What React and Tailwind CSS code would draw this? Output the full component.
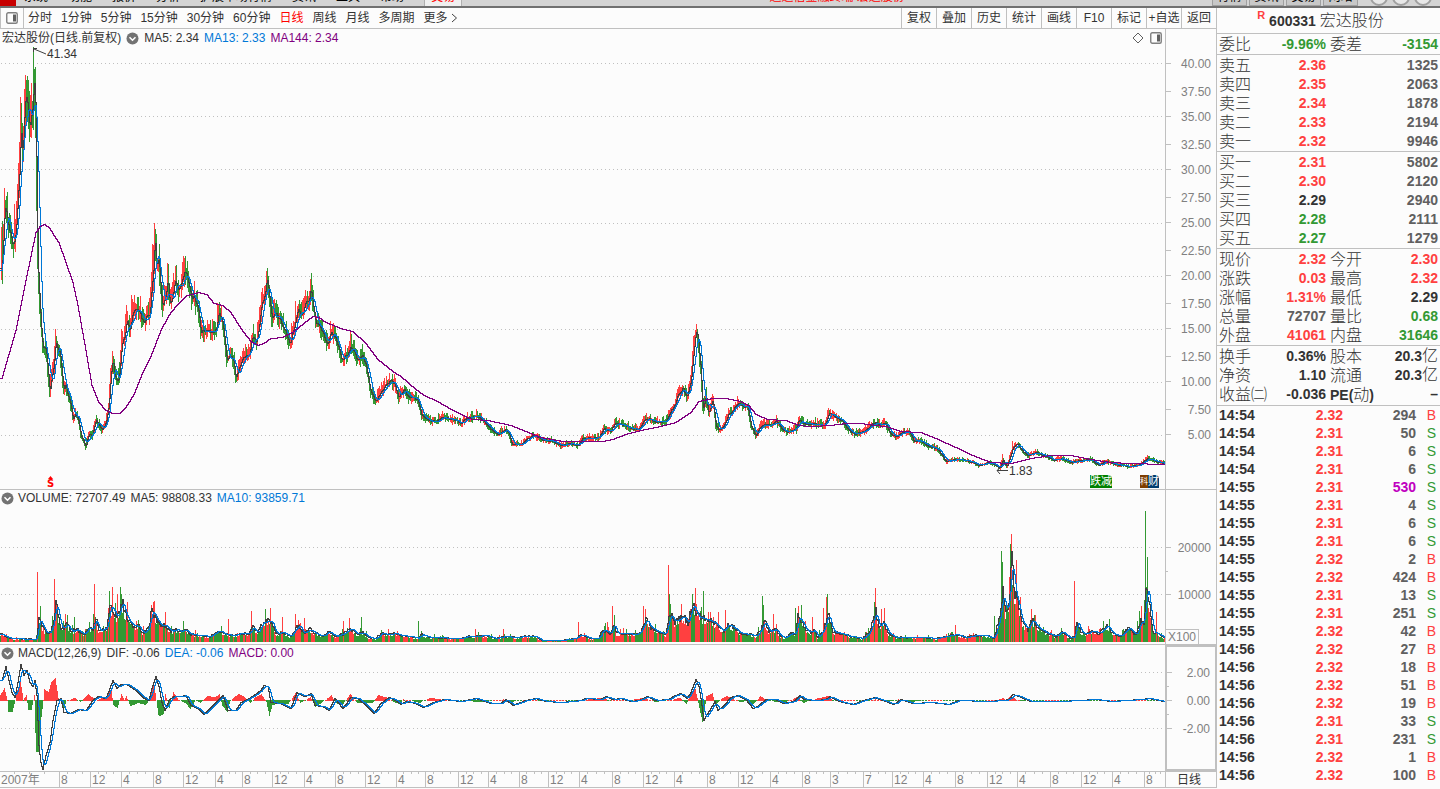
import React from 'react';

const RED = '#ff4040';
const GREEN = '#339933';
const DARK = '#404040';
const BLUE = '#0078d7';
const PURPLE = '#800080';

const periods = ['分时', '1分钟', '5分钟', '15分钟', '30分钟', '60分钟', '日线', '周线', '月线', '多周期', '更多'];
const tools = ['复权', '叠加', '历史', '统计', '画线', 'F10', '标记', '+自选', '返回'];

const R = 'text-[#ff4040]';
const G = 'text-[#339933]';
const D = 'text-[#333333]';
const Y = 'text-[#606060]';

const quoteBlocks = [
  [['委比', '-9.96%', G, '委差', '-3154', G]],
  [
    ['卖五', '2.36', R, '', '1325', Y],
    ['卖四', '2.35', R, '', '2063', Y],
    ['卖三', '2.34', R, '', '1878', Y],
    ['卖二', '2.33', R, '', '2194', Y],
    ['卖一', '2.32', R, '', '9946', Y],
  ],
  [
    ['买一', '2.31', R, '', '5802', Y],
    ['买二', '2.30', R, '', '2120', Y],
    ['买三', '2.29', D, '', '2940', Y],
    ['买四', '2.28', G, '', '2111', Y],
    ['买五', '2.27', G, '', '1279', Y],
  ],
  [
    ['现价', '2.32', R, '今开', '2.30', R],
    ['涨跌', '0.03', R, '最高', '2.32', R],
    ['涨幅', '1.31%', R, '最低', '2.29', D],
    ['总量', '72707', Y, '量比', '0.68', G],
    ['外盘', '41061', R, '内盘', '31646', G],
  ],
  [
    ['换手', '0.36%', D, '股本', '20.3亿', D],
    ['净资', '1.10', D, '流通', '20.3亿', D],
    ['收益㈡', '-0.036', D, 'PE(动)', '–', D],
  ],
];

const trades = [
  ['14:54', '2.32', 294, 'B'],
  ['14:54', '2.31', 50, 'S'],
  ['14:54', '2.31', 6, 'S'],
  ['14:54', '2.31', 6, 'S'],
  ['14:55', '2.31', 530, 'S'],
  ['14:55', '2.31', 4, 'S'],
  ['14:55', '2.31', 6, 'S'],
  ['14:55', '2.31', 6, 'S'],
  ['14:55', '2.32', 2, 'B'],
  ['14:55', '2.32', 424, 'B'],
  ['14:55', '2.31', 13, 'S'],
  ['14:55', '2.31', 251, 'S'],
  ['14:55', '2.32', 42, 'B'],
  ['14:56', '2.32', 27, 'B'],
  ['14:56', '2.32', 18, 'B'],
  ['14:56', '2.32', 51, 'B'],
  ['14:56', '2.32', 19, 'B'],
  ['14:56', '2.31', 33, 'S'],
  ['14:56', '2.31', 231, 'S'],
  ['14:56', '2.32', 1, 'B'],
  ['14:56', '2.32', 100, 'B'],
];

// label and start of each month cell on the time axis
const months = [
  ['2007年', 0], ['8', 59], ['12', 90], ['4', 121], ['8', 153], ['12', 183], ['4', 215], ['8', 242], ['12', 272],
  ['4', 304], ['8', 335], ['12', 365], ['4', 396], ['8', 425], ['12', 458], ['4', 488], ['8', 519], ['12', 548],
  ['4', 579], ['8', 612], ['12', 643], ['4', 674], ['8', 707], ['12', 738], ['4', 770], ['8', 802], ['3', 830],
  ['7', 863], ['12', 892], ['4', 923], ['8', 955], ['12', 987], ['4', 1017], ['8', 1050], ['12', 1081],
  ['4', 1112], ['8', 1144], ['', 1165],
];

const closeKeys = '1:270 2:250 4:205 5:208 8:230 11:238 13:243 15:230 17:200 19:165 20:125 22:150 24:112 25:95 27:105 29:125 31:113 32:108 33:80 34:90 35:120 36:190 37:260 38:283 40:320 42:348 44:347 46:355 48:380 49:392 51:375 53:365 55:340 57:348 59:352 61:370 63:390 65:385 67:395 70:405 72:418 75:412 78:422 80:434 85:446 88:433 91:436 95:420 98:424 101:430 105:422 108:405 110:375 112:360 114:375 117:382 119:370 121:345 124:335 126:320 129:330 132:312 136:308 139:312 143:322 146:318 149:312 151:285 153:265 154:235 156:262 158:262 160:290 162:305 165:298 167:280 169:305 172:295 175:278 178:290 181:282 184:272 187:278 190:295 193:297 197:305 200:330 204:331 208:330 212:333 216:325 218:312 221:318 223:330 226:360 230:356 233:360 235:378 239:366 243:357 249:352 252:335 256:342 259:320 261:302 264:295 266:280 268:290 271:318 274:315 277:315 282:325 287:338 289:343 293:330 297:310 301:315 305:303 308:300 310:290 312:302 315:322 318:325 322:332 326:345 330:333 334:335 337:345 341:360 346:355 350:345 353:352 357:360 362:355 366:368 370:392 375:402 380:392 385:385 390:380 394:384 398:397 403:389 408:397 413:397 417:400 420:413 427:420 435:422 440:417 447:418 455:420 460:423 466:418 476:415 482:420 490:429 497:434 505:429 508:433 511:444 520:444 530:436 535:435 542:440 550:440 560:445 570:443 577:445 582:438 590:438 598:437 603:428 610:431 614:423 620:424 630:428 638:429 645:418 655:421 665:421 670:410 675:402 678:393 682:388 686:397 690:380 693:350 695:332 696:330 698:345 700:370 702:410 705:395 708:413 712:399 715:425 718:430 723:426 727:415 732:410 734:405 738:403 743:407 747:406 750:425 755:435 760:425 765:425 772:424 776:421 782:430 787:432 795:428 798:420 803:423 815:424 824:425 828:412 833:416 841:420 848:430 854:434 863:431 870:425 875:422 880:425 884:422 890:434 895:436 902:432 909:432 913:441 919:440 926:445 937:449 945:461 955:459 965:460 972:462 978:465 988:462 993:464 999:468 1002:459 1006:466 1009:458 1012:447 1017:444 1022:451 1027:455 1035:452 1046:456 1053:460 1061:458 1070:462 1076:461 1090:459 1098:465 1105:461 1115:464 1128:466 1138:465 1143:461 1147:458 1155:461 1163:463';
const longKeys = '1:378 15:330 25:280 35:232 39:226 44:224 49:228 52:233 58:242 65:262 72:282 77:305 85:350 91:385 98:402 105:410 112:413 119:413 125:407 133:394 142:372 150:356 160:330 168:315 175:306 186:295 198:292 206:294 213:303 222:305 230:312 240:328 250:341 257:345 263:343 270:338 282:337 293:331 303:323 312:316 318:317 325:322 340:328 352:331 365:343 377:359 392:371 400:376 415:389 425:396 433:399 447:407 460:414 472:419 487:420 510:425 525:431 540:437 562:441 602:441 612:439 625:434 640:430 655:427 675:422 690:412 698:401 712:398 725:398 740:401 748:405 755:414 767:419 785:420 798:425 810:426 830:425 845:423 860:423 875:425 885:426 900:431 920:432 935:438 955:447 972:455 990:462 1010:463 1030:458 1050:455 1070:455 1090:459 1110:462 1130:463 1163:464';
const priceSpikes = '4:188 14:204 20:97 25:75 26:80 30:95 33:47 34:69 55:329 56:336 112:351 121:329 126:305 131:295 138:297 152:244 154:223 155:229 175:266 184:258 194:281 218:304 261:292 266:271 268:276 295:301 310:279 331:329 350:332 392:374 677:389 682:385 693:336 696:324 705:389 712:394 737:396 828:408 884:418 1002:454 1012:441 1147:455';

const volumeKeys = '1:7 5:5 10:3 35:2 36:5 38:25 41:16 46:8 50:10 53:22 55:40 57:30 60:14 64:14 66:18 70:10 76:12 83:7 88:14 92:12 95:24 98:10 102:12 106:14 109:35 112:33 116:24 119:30 121:42 123:33 127:22 132:16 138:15 142:8 148:14 150:28 152:30 156:22 160:16 165:16 170:10 176:12 180:10 184:12 190:7 200:6 210:5 218:11 225:7 233:6 240:8 248:8 252:14 257:8 261:18 266:20 271:20 275:8 282:9 290:5 294:12 298:16 303:8 309:12 315:8 322:5 328:10 335:5 343:8 350:13 357:7 362:9 368:4 375:3 380:8 388:7 395:8 400:6 410:5 418:3 420:7 430:4 440:4 450:3 460:3 467:5 475:5 485:6 495:3 504:5 515:4 525:5 535:5 541:1 560:1 575:3 580:7 590:3 598:3 602:12 610:8 613:18 616:8 625:8 635:7 640:10 645:22 650:14 657:10 665:7 668:25 671:25 674:20 683:25 687:18 692:38 697:25 705:22 712:20 718:15 723:10 727:17 733:14 740:8 750:7 755:5 760:12 764:20 768:10 775:12 780:5 785:4 790:8 795:8 797:25 801:20 805:12 810:9 813:12 817:4 823:12 827:28 832:10 840:8 850:5 862:3 869:10 875:30 878:14 882:20 888:8 895:4 910:4 925:4 935:3 945:5 955:7 965:4 975:6 985:6 993:3 999:25 1002:50 1005:30 1008:40 1011:85 1014:50 1017:40 1021:20 1027:12 1031:22 1037:14 1045:9 1055:5 1061:10 1070:3 1074:5 1076:22 1080:10 1085:7 1092:11 1098:8 1106:16 1112:8 1120:5 1128:14 1135:6 1140:20 1143:18 1146:60 1149:35 1152:10 1160:6 1163:4';
// positive: red bar, negative: green bar
const volumeSpikes = '37:70 54:63 65:28 74:-25 94:58 109:-51 115:-39 120:-55 121:-48 151:37 165:30 183:-21 228:23 251:31 265:-33 270:34 282:25 295:28 304:24 343:21 349:24 361:-25 418:-21 475:13 503:13 578:20 607:20 612:36 643:36 645:33 668:77 669:-48 681:38 692:-48 703:-51 710:30 718:30 725:32 762:-46 763:-37 773:28 795:-34 798:36 801:-37 812:25 823:34 826:45 827:-48 874:-40 884:34 955:17 994:-26 1001:-91 1002:-80 1009:65 1010:-98 1011:108 1013:70 1016:82 1031:33 1034:-27 1074:61 1145:-131 1146:-55 1147:-85 1156:30';

const histKeys = '0:5 4:12 7:0 8:-12 12:-12 15:0 17:10 20:20 23:0 26:5 28:-10 31:-10 34:5 35:-33 36:-52 38:-52 39:-46 41:-17 43:0 44:11 48:8 51:18 55:22 58:2 60:0 63:-12 66:0 75:2 80:-2 88:6 95:0 105:3 111:10 113:-5 117:-8 121:6 124:0 126:4 130:-6 138:-3 145:-5 149:0 152:15 154:14 156:0 158:-15 160:-16 163:-14 165:6 169:-8 173:8 178:0 185:-3 190:-9 195:0 200:-3 207:4 215:3 219:6 222:-6 227:-12 230:0 238:6 243:4 250:-3 255:3 261:6 266:-2 269:-16 272:-5 280:-3 288:-4 295:7 300:-3 310:3 315:-7 325:0 331:5 335:-3 342:-5 350:6 357:-3 372:-3 378:5 388:2 395:-3 400:-4 403:1 412:-1 420:-3 423:0 430:2 450:0 480:-2 503:1 510:-4 515:0 540:0 550:-1 570:0 605:2 610:-1 645:2 655:-2 680:2 686:-4 690:6 695:11 698:-3 702:-22 704:-12 706:4 712:7 715:-5 722:2 727:4 733:1 740:-2 747:-1 752:-5 757:0 760:4 766:0 782:-3 790:0 797:3 803:-3 810:0 828:4 833:-1 875:1 885:-2 893:-1 898:1 911:-2 925:0 995:0 1003:2 1006:0 1010:4 1015:1 1020:-1 1025:-1 1040:0 1163:0';
const difKeys = '1:20 5:34 8:20 11:8 14:3 17:18 20:36 23:25 26:30 29:18 32:14 34:20 36:5 38:-45 40:-62 42:-69 45:-55 49:-42 52:-20 56:0 60:2 63:-12 70:-13 77:-9 85:-10 92:0 97:4 105:2 109:12 112:20 116:12 120:16 126:16 135:10 142:3 148:0 151:12 155:24 158:14 161:-2 164:-10 168:0 173:4 180:4 185:5 190:-5 197:-8 203:-14 212:-5 222:5 227:-10 235:-10 240:-2 250:3 260:10 263:15 267:14 270:-2 280:-3 290:-8 296:8 304:4 310:7 314:-5 322:-6 328:-10 334:2 342:-8 350:3 357:2 365:-5 373:-13 380:-3 388:3 395:0 400:-4 405:-1 415:-3 422:-7 430:-3 443:1 460:-1 475:2 490:-3 500:-3 505:1 512:-5 525:0 535:2 545:-1 560:-2 580:0 585:2 600:1 605:4 612:1 620:2 630:-1 638:0 647:4 655:0 668:1 672:4 680:7 686:2 690:8 695:21 698:14 700:2 703:-20 706:-14 709:-10 714:-1 717:-10 723:-5 730:3 737:5 745:1 752:-8 758:-5 765:1 775:1 783:-3 793:-1 799:5 803:1 815:0 825:1 829:4 838:-1 852:-4 863:0 874:3 882:0 893:-4 900:1 912:-3 930:-2 948:-4 958:0 985:-1 1003:0 1008:1 1012:6 1018:4 1030:-1 1060:-1 1095:1 1110:-1 1140:1 1148:2 1163:-1';

const parse = (keys) => keys.split(' ').map((k) => k.split(':').map(Number));

const N = 1164;

function fill(keys) {
  const pts = parse(keys);
  const out = [];
  let k = 0;
  for (let x = 0; x <= N; x++) {
    while (k < pts.length - 2 && x > pts[k + 1][0]) k++;
    const [x0, y0] = pts[k];
    const [x1, y1] = pts[k + 1];
    const t = Math.min(1, Math.max(0, (x - x0) / (x1 - x0)));
    out.push(y0 + (y1 - y0) * t);
  }
  return out;
}

function average(values, n) {
  return values.map((_, i) => {
    const part = values.slice(Math.max(0, i - n + 1), i + 1);
    return part.reduce((a, b) => a + b, 0) / part.length;
  });
}

function random(seed) {
  let s = seed;
  return () => {
    s = (s * 16807) % 2147483647;
    return s / 2147483647;
  };
}

// stepped line, one pixel column per sample
function steps(values) {
  let d = '';
  values.forEach((v, x) => {
    const y = Math.round(v) + 0.5;
    d += x === 0 ? `M0 ${y}` : `V${y}H${x + 1}`;
  });
  return d;
}

const bar = (x, top, bottom) => `M${x + 0.5} ${Math.round(top)}V${Math.round(bottom)}`;

function priceChart() {
  const rand = random(71);
  const mid = fill(closeKeys);
  const close = mid.map((y) => y + (rand() - 0.5) * (490 - y) * 0.03);
  const spikes = Object.fromEntries(parse(priceSpikes));
  const paths = { up: '', down: '' };
  let up = true;
  close.forEach((y, x) => {
    if (x === 0) return;
    const prev = close[x - 1];
    if (rand() < 0.75) up = y < prev;
    const reach = (490 - mid[x]) * 0.085;
    const high = spikes[x] ?? Math.min(y, prev) - rand() * reach;
    const low = Math.max(y, prev) + rand() * reach * 0.7 + 1;
    paths[up ? 'up' : 'down'] += bar(x, high - 29, low - 29);
  });
  // opening range of the first sessions
  paths.up += bar(1, 198, 240);
  paths.down += bar(2, 192, 255);
  const shift = (list) => list.map((y) => y - 29);
  return {
    ...paths,
    fast: steps(shift(average(close, 2))),
    slow: steps(shift(average(mid, 6))),
    long: steps(shift(fill(longKeys))),
  };
}

function volumeChart() {
  const rand = random(19);
  const mean = fill(volumeKeys);
  const spikes = Object.fromEntries(parse(volumeSpikes));
  const paths = { up: '', down: '' };
  let up = true;
  mean.forEach((m, x) => {
    if (rand() < 0.55) up = rand() < (x > 660 && x < 700 ? 0.75 : 0.38);
    let h = m * (0.75 + rand() * 0.35);
    if (rand() < 0.14) h = m * (1.2 + rand() * 0.7);
    let rising = up;
    if (spikes[x]) {
      h = Math.abs(spikes[x]);
      rising = spikes[x] > 0;
    }
    paths[rising ? 'up' : 'down'] += bar(x, 152 - Math.max(1, h), 152);
  });
  const rough = mean.map((m) => 151 - m * (0.85 + rand() * 0.3));
  return { ...paths, fast: steps(rough), slow: steps(average(mean, 4).map((m) => 151 - m)) };
}

function macdChart() {
  const hist = fill(histKeys);
  const dif = fill(difKeys);
  const paths = { up: '', down: '' };
  hist.forEach((h, x) => {
    if (h >= 1) paths.up += bar(x, 55 - h, 56);
    if (h <= -1) paths.down += bar(x, 55, 55 - h);
    if (Math.abs(h) < 1 && x % 3 !== 0) paths[x % 29 < 15 ? 'up' : 'down'] += bar(x, 55, 56);
  });
  return {
    ...paths,
    fast: steps(dif.map((v) => 55 - v)),
    slow: steps(average(dif, 5).map((v) => 55 - v)),
  };
}

function Plot({ height, data, grid, className, label }) {
  return (
    <svg
      className={`block w-full ${className}`}
      viewBox={`0 0 1165 ${height}`}
      preserveAspectRatio="none"
      shapeRendering="crispEdges"
      fill="none"
      role="img"
      aria-label={label}
    >
      {grid.map((y) => (
        <path key={y} d={`M1 ${y + 0.5}H1165`} stroke="#c0c0c0" strokeDasharray="1 3" />
      ))}
      <path d={data.up} stroke={RED} />
      <path d={data.down} stroke={GREEN} />
      <path d={data.fast} stroke={DARK} />
      <path d={data.slow} stroke={BLUE} />
      {data.long && <path d={data.long} stroke={PURPLE} />}
    </svg>
  );
}

function FoldButton({ label }) {
  return (
    <button type="button" aria-label={label} className="block">
      <svg width="13" height="13" viewBox="0 0 13 13" fill="none">
        <circle cx="6.5" cy="6.5" r="6" fill="#737373" />
        <path d="M3.5 5.2L6.5 8.2L9.5 5.2" stroke="#fff" strokeWidth="1.6" />
      </svg>
    </button>
  );
}

function PaneIcon({ size }) {
  return (
    <svg width={size} height={size} viewBox="0 0 12 12" fill="none">
      <rect x="0.75" y="0.75" width="10.5" height="10.5" rx="1.5" stroke="#808080" strokeWidth="1.4" />
      <rect x="7" y="2.5" width="3" height="7" fill="#606060" />
    </svg>
  );
}

function AxisMark({ text, className }) {
  return (
    <div className={`flex items-start ${className}`}>
      <div className="flex h-[15px] w-full items-center justify-between pr-[5px]">
        <span className={`h-px bg-[#c0c0c0] ${text ? 'w-[5px]' : 'w-[2px]'}`} />
        <span>{text}</span>
      </div>
    </div>
  );
}

function MenuStrip() {
  return (
    <div className="flex h-2 items-end overflow-hidden border-b-2 border-[#707070] bg-[#d4d4d4] leading-[14px]">
      <span className="h-[6px] w-4 bg-[#c80000]" />
      <nav className="flex gap-5 pb-[2px] pl-2 text-black">
        {['系统', '功能', '报价', '分析', '扩展市场行情', '资讯', '工具', '帮助'].map((name) => (
          <a key={name} href="#menu">{name}</a>
        ))}
      </nav>
      <a href="#trade" className="ml-5 border-x border-[#b0b0b0] bg-[#f0f0f0] px-[6px] pb-[2px] text-[#ff0000]">交易</a>
      <span className="flex-1 pb-[2px] text-center text-[#ff0000]">通达信金融终端 宏达股份</span>
      <div className="flex gap-[2px] pr-3 text-black">
        {['行情', '资讯', '交易', '网站'].map((name) => (
          <button key={name} type="button" className="w-[35px] border border-[#a0a0a0] bg-[#c8c8c8] pb-px">{name}</button>
        ))}
      </div>
      <div className="flex gap-1 pr-2">
        {['min', 'max', 'close'].map((name) => (
          <span key={name} className="h-[18px] w-[18px] rounded-full border-2 border-[#a0a0a0] bg-[#e8e8e8]" />
        ))}
      </div>
    </div>
  );
}

function Toolbar() {
  return (
    <div className="flex h-[21px] items-stretch border-b border-[#c0c0c0] text-[#333333]">
      <button type="button" aria-label="侧栏" className="flex w-6 items-center justify-center border-x border-[#c0c0c0]">
        <PaneIcon size={12} />
      </button>
      <div className="flex flex-1 items-center gap-[9px] pl-1">
        {periods.map((name) => (
          <button key={name} type="button" className={name === '日线' ? 'text-[#ff0000]' : ''}>
            {name}
          </button>
        ))}
        <svg className="-ml-[6px]" width="7" height="10" viewBox="0 0 7 10" fill="none" stroke={DARK}>
          <path d="M1 1L5.5 5L1 9" />
        </svg>
      </div>
      <div className="flex">
        {tools.map((name) => (
          <button key={name} type="button" className="w-[35px] border-l border-[#c0c0c0] whitespace-nowrap">
            {name}
          </button>
        ))}
      </div>
    </div>
  );
}

const prices = ['40.00', '37.50', '35.00', '32.50', '30.00', '27.50', '25.00', '22.50', '20.00', '17.50', '15.00', '12.50', '10.00', '7.50', '5.00'];

function PricePanel() {
  return (
    <section className="flex h-[461px] border-b border-[#c0c0c0]">
      <div className="relative min-w-0 flex-1">
        <Plot
          className="h-[460px]"
          height={460}
          data={priceChart()}
          grid={[34, 87, 140, 194, 247, 300, 353, 406]}
          label="日线 K线图"
        />
        <div className="absolute inset-x-0 top-0 flex h-[18px] items-center gap-[5px] pr-[3px] pl-[2px] text-[#333333]">
          <h1>宏达股份(日线.前复权)</h1>
          <FoldButton label="收起K线" />
          <span>MA5: 2.34</span>
          <span className="text-[#0078d7]">MA13: 2.33</span>
          <span className="text-[#800080]">MA144: 2.34</span>
          <div className="ml-auto flex items-center gap-[6px]">
            <svg width="12" height="12" viewBox="0 0 12 12" fill="none" stroke="#606060">
              <path d="M6 1L11 6L6 11L1 6Z" />
            </svg>
            <PaneIcon size={12} />
          </div>
        </div>
        <div className="absolute top-[18px] left-[33px] flex items-start text-[#333333]">
          <svg width="14" height="8" viewBox="0 0 14 8" fill="none" stroke={DARK}>
            <path d="M0.5 5V1.5H4M1 2L13 7" />
          </svg>
          <span className="leading-[15px]">41.34</span>
        </div>
        <div className="absolute top-[435px] left-[996px] flex items-center text-[#333333]">
          <svg width="13" height="8" viewBox="0 0 13 8" fill="none" stroke={DARK}>
            <path d="M12 3.5H1M4 1L1 3.5L4 7" />
          </svg>
          <span className="leading-[14px]">1.83</span>
        </div>
        <div className="absolute top-[447px] left-[47px] text-[#ff0000]">
          <svg className="mx-auto block" width="5" height="3" viewBox="0 0 5 3" fill="currentColor">
            <path d="M2.5 0L5 3H0Z" />
          </svg>
          <b className="block font-['DejaVu_Sans'] text-[10px] leading-[9px]">S</b>
        </div>
        <span className="absolute top-[446px] left-[1090px] rounded-tr-sm bg-[#008000] text-[11px] leading-[13px] whitespace-nowrap text-white">
          跌减
        </span>
        <span className="absolute top-[446px] left-[1140px] flex rounded-tr-sm bg-[#003c6e] text-[11px] leading-[13px] whitespace-nowrap text-white">
          <span className="bg-[#7d3c00] text-[8px] leading-[13px]">科</span>
          <span>财</span>
        </span>
      </div>
      <div className="w-[51px] border-l border-[#c0c0c0] pt-[27px] text-[#808080]">
        {prices.map((text, i) => (
          <AxisMark key={text} text={text} className={i % 2 ? 'h-[25px]' : 'h-7'} />
        ))}
      </div>
    </section>
  );
}

function VolumePanel() {
  return (
    <section className="flex h-[155px] border-b border-[#c0c0c0]">
      <div className="relative min-w-0 flex-1">
        <Plot className="h-[153px]" height={153} data={volumeChart()} grid={[57, 104]} label="成交量" />
        <div className="absolute top-0 left-0 flex h-4 items-center gap-[5px] pl-px text-[#333333]">
          <FoldButton label="收起成交量" />
          <span className="-ml-px">VOLUME: 72707.49</span>
          <span>MA5: 98808.33</span>
          <span className="text-[#0078d7]">MA10: 93859.71</span>
        </div>
      </div>
      <div className="flex w-[51px] flex-col border-l border-[#c0c0c0] pt-[50px] text-[#808080]">
        <AxisMark text="20000" className="h-6" />
        <AxisMark text="" className="h-[23px]" />
        <AxisMark text="10000" className="h-6" />
        <div className="mt-auto w-[33px] border-t border-r border-[#c0c0c0] pl-[2px] leading-[14px]">X100</div>
      </div>
    </section>
  );
}

function MacdPanel() {
  return (
    <section className="flex h-[127px] border-b border-[#c0c0c0]">
      <div className="relative min-w-0 flex-1">
        <Plot className="h-[125px]" height={125} data={macdChart()} grid={[27, 55, 83]} label="MACD" />
        <div className="absolute top-0 left-0 flex h-4 items-center gap-[5px] pl-px text-[#333333]">
          <FoldButton label="收起MACD" />
          <span className="-ml-px">MACD(12,26,9)</span>
          <span>DIF: -0.06</span>
          <span className="text-[#0078d7]">DEA: -0.06</span>
          <span className="text-[#800080]">MACD: 0.00</span>
        </div>
      </div>
      <div className="w-[51px] border-2 border-r border-[#c0c0c0] pt-[18px] text-[#808080]">
        <AxisMark text="2.00" className="h-[14px]" />
        <AxisMark text="" className="h-[14px]" />
        <AxisMark text="0.00" className="h-[14px]" />
        <AxisMark text="" className="h-[14px]" />
        <AxisMark text="-2.00" className="h-[14px]" />
      </div>
    </section>
  );
}

function TimeAxis() {
  const cells = months.slice(0, -1).map(([text, start], i) => ({ text, width: months[i + 1][1] - start }));
  return (
    <div className="flex h-4 border-b border-[#c0c0c0] text-[#808080]">
      <div className="grid min-w-0 flex-1" style={{ gridTemplateColumns: cells.map((c) => `${c.width}fr`).join(' ') }}>
        {cells.map((c, i) => (
          <div key={i} className={`relative min-w-0 pl-px leading-4 whitespace-nowrap ${i ? 'border-l border-[#c0c0c0]' : ''}`}>
            {c.text}
            <span className="absolute inset-x-0 top-0 flex justify-evenly">
              <i className="h-[2px] w-px bg-[#c0c0c0]" />
              <i className="h-[2px] w-px bg-[#c0c0c0]" />
              <i className="h-[2px] w-px bg-[#c0c0c0]" />
            </span>
          </div>
        ))}
      </div>
      <button type="button" className="w-[51px] border-l border-[#c0c0c0] pr-1 leading-4 text-[#333333]">日线</button>
    </div>
  );
}

function Sidebar() {
  return (
    <aside className="w-[224px] shrink-0 border-l border-[#c0c0c0] font-['Liberation_Sans','Noto_Sans_CJK_SC',sans-serif] text-sm">
      <h2 className="flex h-[26px] items-center justify-center border-b border-[#c0c0c0] pr-4 text-[#333333]">
        <sup className="pr-1 text-[11px] font-bold text-[#ff4040]">R</sup>
        <b>600331</b>
        <span className="pl-1 text-base font-light">宏达股份</span>
      </h2>
      {quoteBlocks.map((rows, b) => (
        <table
          key={b}
          className={`w-full table-fixed border-separate border-spacing-0 border-b border-[#c0c0c0] pt-px ${b === 4 ? 'pb-px' : ''}`}
        >
          <colgroup>
            <col className="w-[50px]" />
            <col className="w-[59px]" />
            <col className="w-[50px]" />
            <col />
          </colgroup>
          <tbody>
            {rows.map(([name, value, tone, name2, value2, tone2]) => (
              <tr key={name} className="h-[19px] leading-[19px] whitespace-nowrap">
                <th scope="row" className="p-0 pl-[2px] text-left text-base leading-[19px] font-light text-[#333333]">{name}</th>
                <td className={`p-0 text-right font-bold ${tone}`}>{value}</td>
                <th scope={name2 ? 'row' : undefined} className="p-0 pl-1 text-left text-base leading-[19px] font-light text-[#333333]">
                  {name2.startsWith('PE') ? (
                    <>
                      <span className="text-sm leading-none font-bold">PE(</span>动<span className="text-sm leading-none font-bold">)</span>
                    </>
                  ) : name2}
                </th>
                <td className={`p-0 pr-[2px] text-right font-bold ${tone2}`}>
                  {value2.replace('亿', '')}
                  {value2.endsWith('亿') && <span className="text-base leading-none font-light">亿</span>}
                </td>
              </tr>
            ))}
          </tbody>
        </table>
      ))}
      <table className="w-full table-fixed border-separate border-spacing-0 font-bold">
        <colgroup>
          <col className="w-[60px]" />
          <col className="w-[66px]" />
          <col className="w-[73px]" />
          <col />
        </colgroup>
        <tbody>
          {trades.map(([time, price, count, side], i) => (
            <tr key={i} className="h-[18px] leading-[18px]">
              <td className="p-0 pl-[2px] text-[#333333]">{time}</td>
              <td className="p-0 text-right text-[#ff4040]">{price}</td>
              <td className={`p-0 text-right ${count >= 500 ? 'text-[#c000c0]' : 'text-[#606060]'}`}>{count}</td>
              <td className={`p-0 pr-1 text-right font-normal ${side === 'B' ? 'text-[#ff4040]' : 'text-[#339933]'}`}>{side}</td>
            </tr>
          ))}
        </tbody>
      </table>
    </aside>
  );
}

export default function App() {
  return (
    <div className="min-h-screen bg-[#fcfcfc] font-['Liberation_Sans','Noto_Sans_CJK_SC',sans-serif] text-xs">
      <MenuStrip />
      <div className="flex">
        <main className="min-w-0 flex-1">
          <Toolbar />
          <PricePanel />
          <VolumePanel />
          <MacdPanel />
          <TimeAxis />
        </main>
        <Sidebar />
      </div>
    </div>
  );
}
